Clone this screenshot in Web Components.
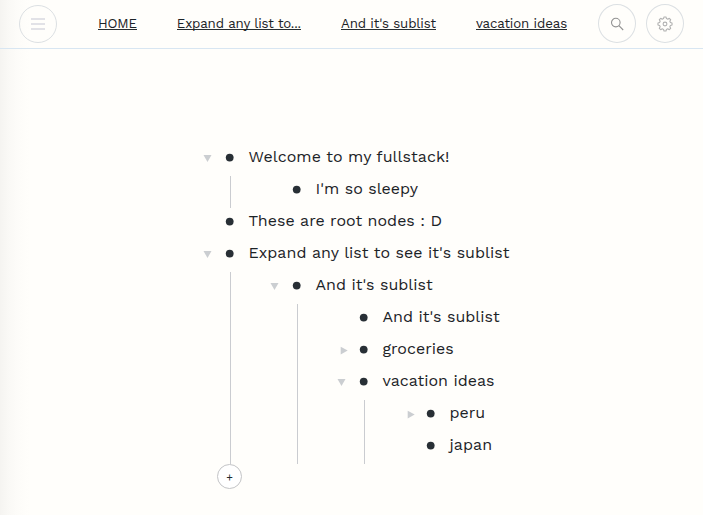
<!DOCTYPE html>
<html lang="en">
<head>
<meta charset="utf-8">
<title>Outline</title>
<style>
html,body{margin:0;height:100%}
body{background:#fffefb;color:#1c2327;font-family:"Work Sans",Inter,"Liberation Sans",sans-serif;overflow:hidden}
</style>
</head>
<body>
<outline-app></outline-app>
<script>
// Text with a set run length: the tracking is derived from the natural width.
class FitText extends HTMLElement{
  connectedCallback(){
    const root=this.attachShadow({mode:'open'});
    root.innerHTML='<style>:host{display:inline-block;white-space:pre}span{display:inline-block}</style><span></span>';
    const s=root.querySelector('span');
    s.textContent=this.getAttribute('text');
    const w=Number(this.getAttribute('run'));
    s.style.letterSpacing=((w-s.getBoundingClientRect().width)/s.textContent.length)+'px';
  }
}
class NavLink extends HTMLElement{
  connectedCallback(){
    this.attachShadow({mode:'open'}).innerHTML=`<style>
:host{display:block;font-size:13.3px;line-height:18px;height:18px}
a{display:block;color:#1c2327;height:14px;border-bottom:1px solid #282e31}
fit-text{height:18px;vertical-align:top}
</style><a><fit-text text="${this.getAttribute('text')}" run="${this.getAttribute('run')}"></fit-text></a>`;
  }
}
class RoundButton extends HTMLElement{
  connectedCallback(){
    this.attachShadow({mode:'open'}).innerHTML=`<style>
:host{display:flex;box-sizing:border-box;width:38px;height:38px;border:1px solid #dce0e3;border-radius:50%;align-items:center;justify-content:center}
</style><slot></slot>`;
  }
}
class TopBar extends HTMLElement{
  connectedCallback(){
    this.attachShadow({mode:'open'}).innerHTML=`<style>
:host{display:flex;box-sizing:border-box;height:49px;border-bottom:1px solid #d8e6f2;padding:5px 19px 0;align-items:flex-start}
nav{display:flex;gap:40px;margin:10px 0 0 41px}
.tools{display:flex;gap:10px;margin-left:auto;margin-top:-1px}
.tools round-button{height:39px}
svg{display:block;fill:none}
</style>
<round-button><svg width="14" height="12" viewBox="0 0 14 12" stroke="#e2e2e7" stroke-width="2"><path d="M0 1h14M0 6h14M0 11h14"/></svg></round-button>
<nav>
<nav-link text="HOME" run="38.8"></nav-link>
<nav-link text="Expand any list to..." run="124.2"></nav-link>
<nav-link text="And it's sublist" run="95"></nav-link>
<nav-link text="vacation ideas" run="91"></nav-link>
</nav>
<div class="tools">
<round-button><svg width="14" height="14" viewBox="0 0 14 14" stroke="#929292" stroke-width="1.1"><circle cx="5.8" cy="5.6" r="4.3"/><path d="M8.9 8.7l4.3 4.3"/></svg></round-button>
<round-button><svg id="gear" width="16" height="16" viewBox="-8 -8 16 16" stroke="#b1b1b1" stroke-width="1.1" stroke-linejoin="round"><circle r="1.9"/></svg></round-button>
</div>`;
    const pts=[];
    for(let i=0;i<8;i++) for(const [a,r] of [[-15,5.6],[-8,7.1],[8,7.1],[15,5.6]]){
      const t=(i*45+a)*Math.PI/180;
      pts.push((r*Math.cos(t)).toFixed(2)+' '+(r*Math.sin(t)).toFixed(2));
    }
    const p=document.createElementNS('http://www.w3.org/2000/svg','path');
    p.setAttribute('d','M'+pts.join('L')+'Z');
    this.shadowRoot.getElementById('gear').append(p);
  }
}
class TreeNode extends HTMLElement{
  connectedCallback(){
    const state=this.getAttribute('state');
    const arrow=state==='open'?'<path d="M3.5 11h8l-4 7z"/>':state==='closed'?'<path d="M6.7 10.7v7.8l7-3.9z"/>':'';
    this.attachShadow({mode:'open'}).innerHTML=`<style>
:host{display:block}
.row{display:flex;height:32px}
.row svg{display:block;width:49px;margin-right:-.5px;flex:none;height:32px}
fit-text{font-size:16px;line-height:26px}
.kids{margin-left:30px;border-left:1px solid #caccd0;padding-left:36px}
</style>
<div class="row"><svg viewBox="0 0 49 32"><g fill="#cbced1">${arrow}</g><circle cx="29.7" cy="13.6" r="3.9" fill="#282f35"/></svg><fit-text text="${this.getAttribute('text')}" run="${this.getAttribute('run')}"></fit-text></div>
${this.children.length?'<div class="kids"><slot></slot></div>':''}`;
  }
}
class AddButton extends HTMLElement{
  connectedCallback(){
    this.attachShadow({mode:'open'}).innerHTML=`<style>
:host{display:flex;box-sizing:border-box;width:25px;height:25px;margin-left:17px;border:1px solid #c3c4c6;border-radius:50%;background:#fff;align-items:center;justify-content:center;font:400 11px/12px "Work Sans",Inter,sans-serif;padding-top:3px;color:#22282b}
</style>+`;
  }
}
class OutlineApp extends HTMLElement{
  connectedCallback(){
    this.attachShadow({mode:'open'}).innerHTML=`<style>
:host{display:block;box-sizing:border-box;height:515px;background:linear-gradient(90deg,#f5f4f1 0,#faf9f6 9px,#fdfcf9 18px,#fffefb 30px)}
main{padding:95px 0 0 200px}
</style>
<top-bar></top-bar>
<main>
<tree-node state="open" text="Welcome to my fullstack!" run="201"><tree-node text="I'm so sleepy" run="102.6"></tree-node></tree-node>
<tree-node text="These are root nodes : D" run="193.5"></tree-node>
<tree-node state="open" text="Expand any list to see it's sublist" run="261"><tree-node state="open" text="And it's sublist" run="117.2"><tree-node text="And it's sublist" run="117.2"></tree-node><tree-node state="closed" text="groceries" run="71.2"></tree-node><tree-node state="open" text="vacation ideas" run="112"><tree-node state="closed" text="peru" run="35.7"></tree-node><tree-node text="japan" run="42.7"></tree-node></tree-node></tree-node></tree-node>
<add-button></add-button>
</main>`;
  }
}
[['fit-text',FitText],['nav-link',NavLink],['round-button',RoundButton],['top-bar',TopBar],['tree-node',TreeNode],['add-button',AddButton],['outline-app',OutlineApp]].forEach(([n,c])=>customElements.define(n,c));
</script>
</body>
</html>
